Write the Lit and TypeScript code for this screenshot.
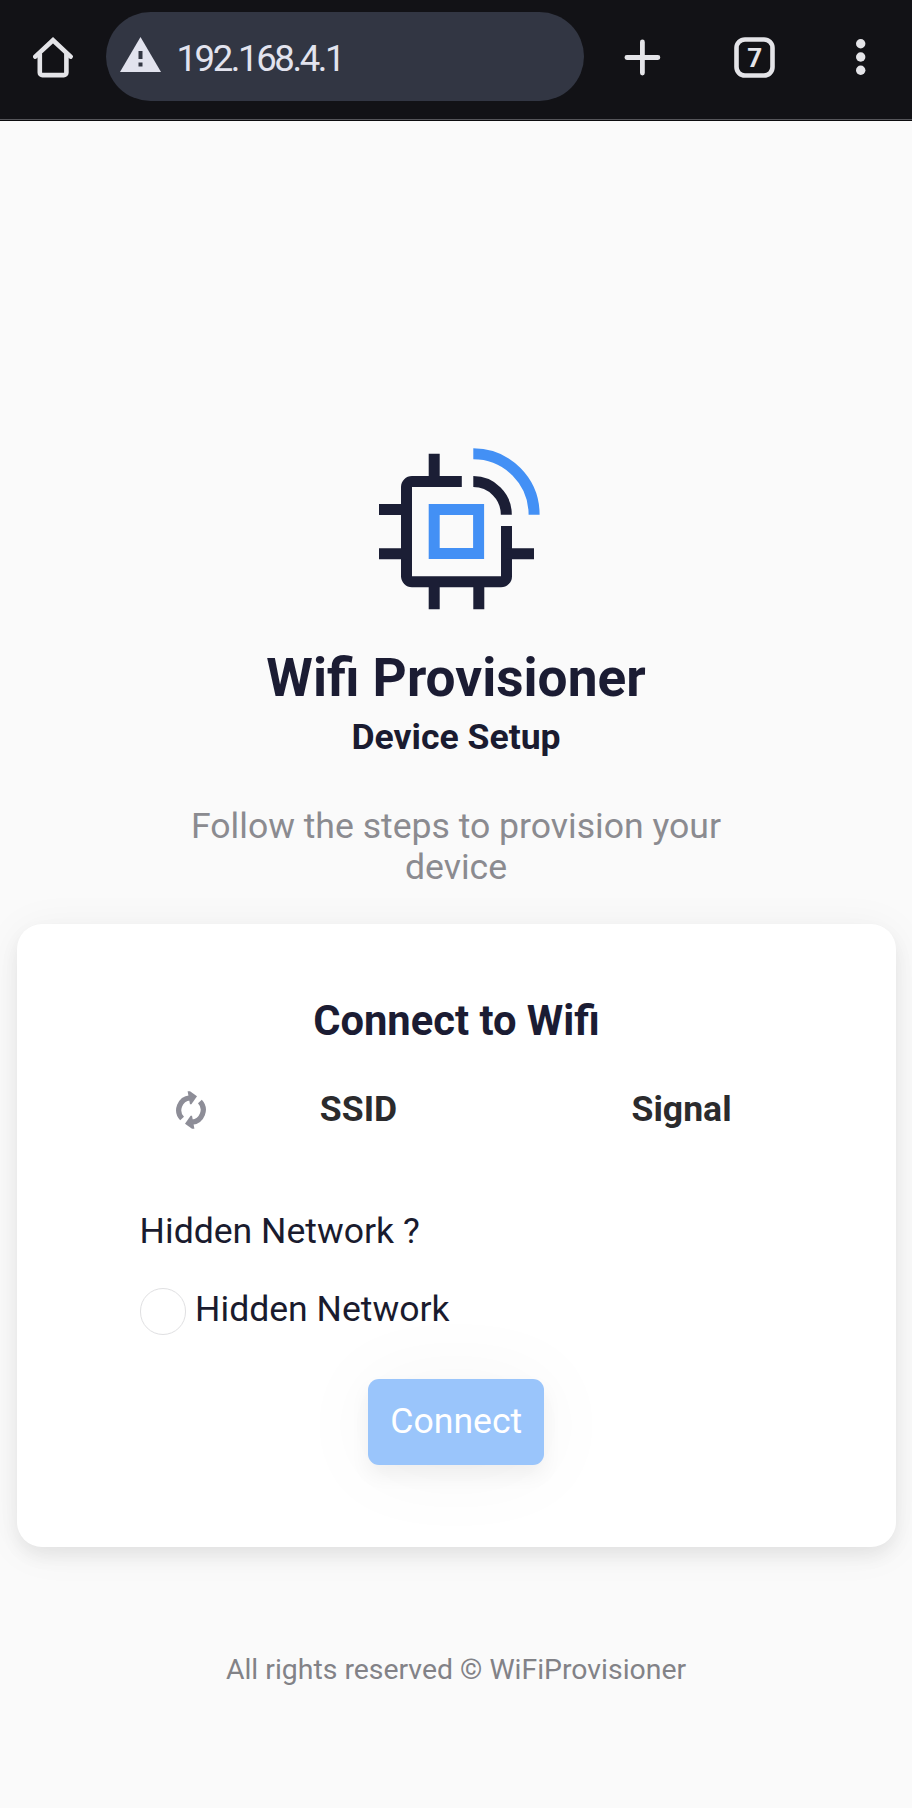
import { LitElement, html, css } from "lit";
import { customElement } from "lit/decorators.js";

@customElement("browser-bar")
class BrowserBar extends LitElement {
  static styles = css`
    :host { display: flex; align-items: flex-start; box-sizing: border-box; height: 121px; padding-top: 12px;
      background: linear-gradient(#121216 0 119px, #55555a 119px 120px, #0c0c0e 120px 121px);
      font-family: Roboto, sans-serif; }
    .cell { display: flex; align-items: center; height: 90px; }
    .home { width: 73px; padding-left: 33px; }
    .pill { display: flex; align-items: center; box-sizing: border-box; width: 478px; height: 89px;
      padding-left: 14px; gap: 15.5px; border-radius: 45px; background: #323643; }
    .warn { margin-top: -4px; }
    .url { font-size: 36.5px; line-height: 44px; letter-spacing: -2.4px; color: #e2e3ee; padding-top: 4px; }
    .plus { padding-left: 40px; }
    .tabs { padding-left: 72.5px; }
    .dots { padding-left: 80.5px; }
    svg { display: block; }
    .count { font: 700 26px Roboto, sans-serif; }
  `;
  render() {
    return html`
      <div class="cell home">
        <svg width="41" height="41" viewBox="0 0 41 41" fill="none" stroke="#e4e4e8" stroke-width="4.6" stroke-linecap="round" stroke-linejoin="round">
          <path d="M2.3 19.6 20 3.2 37.6 19.6" stroke-linejoin="miter" />
          <path d="M6.8 17V35.5a2.6 2.6 0 0 0 2.6 2.6H30.8a2.6 2.6 0 0 0 2.6-2.6V17" />
        </svg>
      </div>
      <div class="pill">
        <svg class="warn" width="41" height="35" viewBox="0 0 41 35">
          <path d="M20.5 0 41 35H0Z" fill="#e2e3ee" />
          <path d="M18.5 14h4v8h-4zM18.5 25.5h4v4h-4z" fill="#323643" />
        </svg>
        <span class="url">192.168.4.1</span>
      </div>
      <div class="cell plus">
        <svg width="37" height="37" viewBox="0 0 37 37" stroke="#e4e4e8" stroke-width="4.8" stroke-linecap="round">
          <path d="M18.4 3v31M2.9 18.5h31" />
        </svg>
      </div>
      <div class="cell tabs">
        <svg width="41" height="41" viewBox="0 0 41 41">
          <rect x="2.5" y="2.5" width="36" height="36" rx="8.5" fill="none" stroke="#e4e4e8" stroke-width="4.6" />
          <text class="count" x="20.6" y="30" text-anchor="middle" fill="#e4e4e8">7</text>
        </svg>
      </div>
      <div class="cell dots">
        <svg width="12" height="38" viewBox="0 0 12 38" fill="#e4e4e8">
          <circle cx="5.7" cy="5.7" r="4.7" /><circle cx="5.7" cy="19" r="4.7" /><circle cx="5.7" cy="32.3" r="4.7" />
        </svg>
      </div>
    `;
  }
}

@customElement("wifi-card")
class WifiCard extends LitElement {
  static styles = css`
    :host { display: block; box-sizing: border-box; height: 623px; margin: 0 16px 0 17px; padding-top: 72px;
      border-radius: 25px; background: #fff;
      box-shadow: 0 9px 18px rgba(10, 10, 10, 0.065), 0 4px 44px rgba(10, 10, 10, 0.05); }
    .title { margin: 0; font-size: 41.7px; line-height: 50px; font-weight: 700; text-align: center; color: #1b1c33; }
    .table { display: grid; grid-template-columns: 86px 224px 322px; align-items: center; height: 42px;
      margin: 42px 0 0 132px; line-height: 42px; font-weight: 700; color: #2b2b2d; text-align: center; }
    .refresh { display: block; margin: 2px auto 0; transform: translateX(-1px); }
    .ssid { padding-left: 23px; }
    .signal { padding-left: 172.5px; text-align: left; }
    .form { margin: 80px 0 0 122.6px; color: #1a1b2e; }
    .label { line-height: 42px; }
    .option { display: flex; align-items: flex-start; gap: 9px; height: 47px; margin-top: 36px; line-height: 42px; }
    .radio { box-sizing: border-box; width: 46.5px; height: 46.5px; border: 1.8px solid #e0e0e2; border-radius: 50%; }
    .actions { display: flex; justify-content: center; margin: 44px 0.4px 0 0; }
    .connect { width: 176px; height: 86px; padding: 0 0 2px; border: 0; border-radius: 11px; background: #9ac5fb; color: #fff;
      font: 400 35.6px Roboto, sans-serif;
      box-shadow: 0 10px 20px rgba(10, 10, 10, 0.055), 0 3px 90px rgba(10, 10, 10, 0.045); }
  `;
  render() {
    return html`
      <h2 class="title">Connect to Wifi</h2>
      <div class="table">
        <svg class="refresh" width="32" height="40" viewBox="-16 -20 32 40">
          <g fill="#8d8d97">
            <path d="M-8.9 8.6A12.4 12.4 0 0 1-1-12.2" fill="none" stroke="#8d8d97" stroke-width="5.2" />
            <path d="M-3.4-18.8-1-18.8 6-13.8 .4-5.8-1-5.8Z" />
          </g>
          <g fill="#8d8d97" transform="rotate(180)">
            <path d="M-8.9 8.6A12.4 12.4 0 0 1-1-12.2" fill="none" stroke="#8d8d97" stroke-width="5.2" />
            <path d="M-3.4-18.8-1-18.8 6-13.8 .4-5.8-1-5.8Z" />
          </g>
        </svg>
        <span class="ssid">SSID</span>
        <span class="signal">Signal</span>
      </div>
      <div class="form">
        <div class="label">Hidden Network ?</div>
        <div class="option"><span class="radio"></span><span>Hidden Network</span></div>
      </div>
      <div class="actions"><button class="connect">Connect</button></div>
    `;
  }
}

@customElement("app-root")
class AppRoot extends LitElement {
  static styles = css`
    :host { display: block; height: 1808px; overflow: hidden; background: #fafafa;
      font-family: Roboto, sans-serif; font-size: 35.6px; }
    .hero { display: flex; flex-direction: column; align-items: center; height: 803.3px; text-align: center; color: #1b1c33; }
    .logo { display: block; margin: 327px 0 0 7px; flex: none; }
    .name { margin: 37.4px 0 0; font-size: 53.2px; line-height: 62px; font-weight: 700; }
    .sub { margin: 7px 0 0; font-size: 35.6px; line-height: 42px; font-weight: 700; color: #1a1b30; }
    .lead { width: 570px; margin: 47.5px 0 0; line-height: 41.4px; color: #8b8b90; }
    .footer { margin-top: 105.3px; font-size: 28.4px; line-height: 34px; text-align: center; color: #828287; }
  `;
  render() {
    return html`
      <browser-bar></browser-bar>
      <header class="hero">
        <svg class="logo" width="161" height="162" viewBox="379 448 161 162" fill="none" stroke="#1b1e35" stroke-width="11">
          <path d="M461.8 481.5H412a5.6 5.6 0 0 0-5.5 5.5v89.3a5.6 5.6 0 0 0 5.5 5.5h89a5.6 5.6 0 0 0 5.5-5.5V526" />
          <path d="M434.2 453.7V482M379 509.4h28M379 553.7h28M506 553.7h28M434.2 581v28.3M478.8 581v28.3" />
          <path d="M473.3 481.6a33 33 0 0 1 33 33.2" />
          <path d="M473.3 453.8a60.8 60.8 0 0 1 60.8 61" stroke="#4390f5" />
          <rect x="434.2" y="509.5" width="44.4" height="44" stroke="#4390f5" />
        </svg>
        <h1 class="name">Wifi Provisioner</h1>
        <h2 class="sub">Device Setup</h2>
        <p class="lead">Follow the steps to provision your device</p>
      </header>
      <wifi-card></wifi-card>
      <footer class="footer">All rights reserved © WiFiProvisioner</footer>
    `;
  }
}
